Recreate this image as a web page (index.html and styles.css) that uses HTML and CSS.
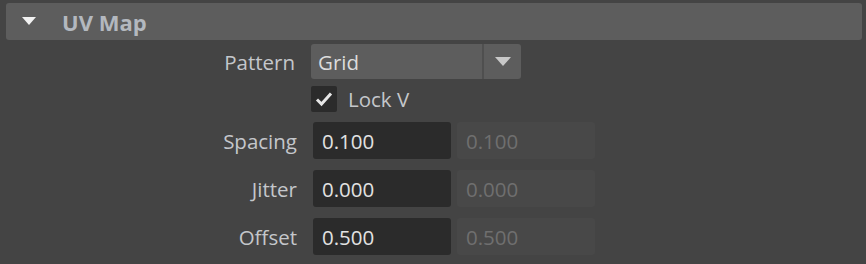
FILE: index.html
```html
<!DOCTYPE html>
<html lang="en">
<head>
    <meta charset="UTF-8">
    <title>UV Map</title>
    <link rel="stylesheet" href="styles.css">
</head>
<body>
    <div class="section">
        <div class="section-header">
            <span class="arrow"></span>
            <span class="title">UV Map</span>
        </div>

        <div class="form">
            <div class="row row-pattern">
                <label class="label">Pattern</label>
                <div class="dropdown">
                    <span class="dropdown-value">Grid</span>
                    <span class="dropdown-btn"><span class="dropdown-arrow"></span></span>
                </div>
            </div>

            <div class="row row-check">
                <span class="label"></span>
                <span class="checkbox">
                    <svg width="18" height="16" viewBox="0 0 18 16">
                        <path d="M2 8.5 L6.5 13 L16 2.5" fill="none" stroke="#e6e6e6" stroke-width="3"/>
                    </svg>
                </span>
                <span class="check-text">Lock V</span>
            </div>

            <div class="row row-field">
                <label class="label">Spacing</label>
                <div class="input">0.100</div>
                <div class="input disabled">0.100</div>
            </div>

            <div class="row row-field">
                <label class="label">Jitter</label>
                <div class="input">0.000</div>
                <div class="input disabled">0.000</div>
            </div>

            <div class="row row-field">
                <label class="label">Offset</label>
                <div class="input">0.500</div>
                <div class="input disabled">0.500</div>
            </div>
        </div>
    </div>
</body>
</html>
```

FILE: styles.css
```css
* {
    margin: 0;
    padding: 0;
    box-sizing: border-box;
}

body {
    font-family: "Open Sans", sans-serif;
    font-size: 20.5px;
    color: #c4c7cb;
    background-color: #444444;
    width: 866px;
    height: 264px;
    overflow: hidden;
}

.section {
    padding: 3px 4px 0 6px;
}

.section-header {
    height: 37px;
    background-color: #5d5d5d;
    border-radius: 3px;
    display: flex;
    align-items: center;
}

.arrow {
    width: 0;
    height: 0;
    margin-left: 16px;
    margin-top: -1px;
    border-left: 7px solid transparent;
    border-right: 7px solid transparent;
    border-top: 8px solid #f2f2f2;
}

.title {
    margin-left: 26px;
    margin-top: 1px;
    font-size: 22px;
    font-weight: bold;
    color: #b3b8bf;
}

.form {
    margin-left: -6px;
}

.row {
    display: flex;
    align-items: center;
}

.label {
    width: 297px;
    text-align: right;
    flex-shrink: 0;
}

.row-pattern {
    margin-top: 4px;
    height: 35px;
}

.row-pattern .label {
    padding-right: 2px;
}

.dropdown {
    margin-left: 14px;
    width: 210px;
    height: 35px;
    background-color: #5d5d5d;
    border-radius: 3px;
    display: flex;
    align-items: center;
}

.dropdown-value {
    flex: 1;
    padding-left: 7px;
    color: #dcdcdc;
}

.dropdown-btn {
    width: 39px;
    height: 35px;
    border-left: 2px solid #4f4f4f;
    display: flex;
    align-items: center;
    justify-content: center;
}

.dropdown-arrow {
    width: 0;
    height: 0;
    border-left: 8px solid transparent;
    border-right: 8px solid transparent;
    border-top: 9px solid #c8c8c8;
}

.row-check {
    margin-top: 7px;
    height: 26px;
}

.checkbox {
    margin-left: 14px;
    width: 26px;
    height: 26px;
    background-color: #2b2b2b;
    border-radius: 2px;
    display: flex;
    align-items: center;
    justify-content: center;
}

.check-text {
    margin-left: 11px;
    color: #c4c7cb;
}

.row-field {
    margin-top: 10px;
    height: 37px;
}

.row-field + .row-field {
    margin-top: 11px;
}

.input {
    width: 138px;
    height: 37px;
    margin-left: 6px;
    padding-left: 9px;
    background-color: #2b2b2b;
    border-radius: 3px;
    color: #e2e2e2;
    display: flex;
    align-items: center;
}

.label + .input {
    margin-left: 16px;
}

.input.disabled {
    background-color: #484848;
    color: #6f6f6f;
}
```
